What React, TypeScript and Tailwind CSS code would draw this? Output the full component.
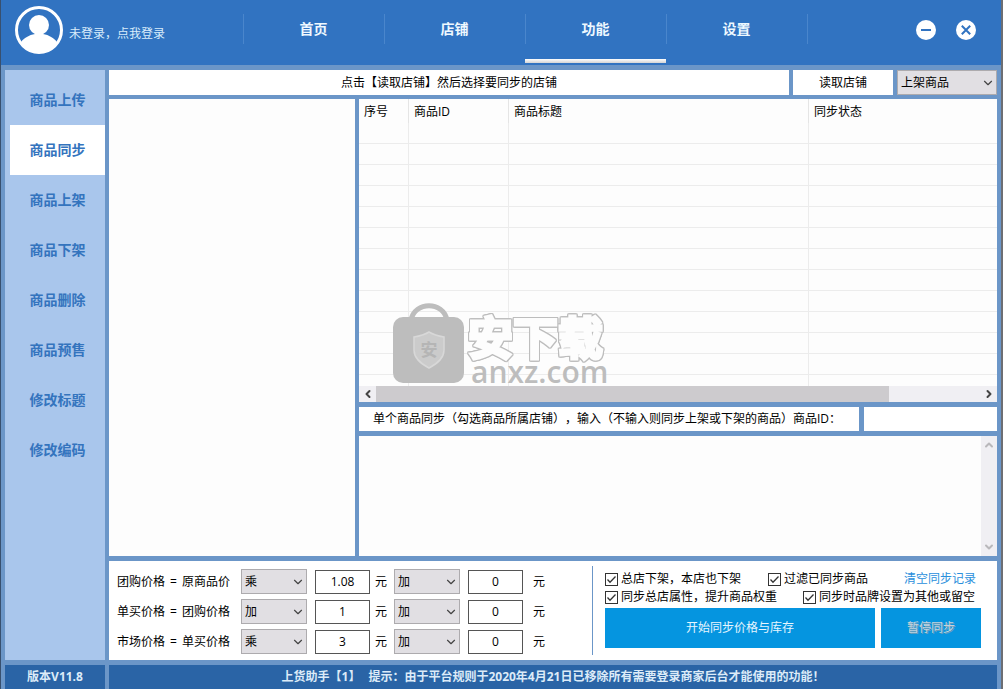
import { useState } from "react";
import { ChevronDown, ChevronLeft, ChevronRight, ChevronUp } from "lucide-react";

const tabs = ["首页", "店铺", "功能", "设置"];

const menuItems = [
  "商品上传",
  "商品同步",
  "商品上架",
  "商品下架",
  "商品删除",
  "商品预售",
  "修改标题",
  "修改编码",
];

const priceRules = [
  { target: "团购价格", source: "原商品价", op: "乘", factor: "1.08" },
  { target: "单买价格", source: "团购价格", op: "加", factor: "1" },
  { target: "市场价格", source: "单买价格", op: "乘", factor: "3" },
];

const operators = ["加", "减", "乘", "除"];

function Select({ label, value, options, className }: { label: string; value: string; options: string[]; className: string }) {
  return (
    <div className={`relative ${className}`}>
      <select
        aria-label={label}
        defaultValue={value}
        className="h-full w-full appearance-none border border-[#adabae] bg-[#e1dfe3] pl-[3px] text-black"
      >
        {options.map((option) => (
          <option key={option}>{option}</option>
        ))}
      </select>
      <ChevronDown className="pointer-events-none absolute top-1/2 right-[2px] size-[14px] -translate-y-1/2 text-[#444]" strokeWidth={2} />
    </div>
  );
}

function NumberInput({ label, value }: { label: string; value: string }) {
  return (
    <input
      type="text"
      aria-label={label}
      defaultValue={value}
      className="h-6 w-[55px] border border-[#555] bg-white text-center"
    />
  );
}

function Check({ label, className }: { label: string; className?: string }) {
  return (
    <label className={`flex items-center gap-[3px] whitespace-nowrap ${className ?? ""}`}>
      <span className="relative size-[13px]">
        <input type="checkbox" defaultChecked className="peer block size-[13px] appearance-none border border-[#333] bg-white" />
        <svg viewBox="0 0 13 13" className="pointer-events-none absolute inset-0 hidden size-[13px] peer-checked:block">
          <path d="M2.5 6.5 5 9.2 10.5 3.5" fill="none" stroke="#333" strokeWidth="1.3" />
        </svg>
      </span>
      {label}
    </label>
  );
}

function Header() {
  const [active, setActive] = useState("功能");

  return (
    <header className="flex h-[65px] shrink-0 bg-[#3173c1]">
      <a href="#login" className="flex w-[242px] shrink-0 items-start gap-[6px] pt-[6px] pl-[14px] text-[#d9edfb]">
        <svg viewBox="0 0 48 48" className="size-12">
          <defs>
            <clipPath id="avatar">
              <circle cx="24" cy="24" r="22.5" />
            </clipPath>
          </defs>
          <circle cx="24" cy="24" r="22.5" fill="none" stroke="#fff" strokeWidth="3" />
          <g fill="#fff" clipPath="url(#avatar)">
            <circle cx="24" cy="19" r="10" />
            <path d="M20 26h8v2c6 1 11 4 14 8l2 12H4l2-12c3-4 8-7 14-8z" />
          </g>
        </svg>
        <span className="mt-5">未登录，点我登录</span>
      </a>

      <nav className="flex">
        {tabs.map((tab) => (
          <button
            key={tab}
            type="button"
            onClick={() => setActive(tab)}
            className="relative w-[141px] pb-[7px] text-sm font-bold text-[#eef8ff]"
          >
            <span className="absolute top-[14px] left-0 h-[30px] w-px bg-[#4a86cc]" />
            {tab}
            {tab === active && (
              <span className="absolute bottom-[2px] left-0 h-[4px] w-full bg-linear-to-b from-white to-[#d4d4d4]" />
            )}
          </button>
        ))}
        <span className="mt-[14px] h-[30px] w-px bg-[#4a86cc]" />
      </nav>

      <div className="ml-auto flex items-start gap-5 pt-5 pr-[25px]">
        <button type="button" aria-label="最小化">
          <svg viewBox="0 0 20 20" className="size-5">
            <circle cx="10" cy="10" r="10" fill="#fff" />
            <path d="M5 10h10" stroke="#3173c1" strokeWidth="2" />
          </svg>
        </button>
        <button type="button" aria-label="关闭">
          <svg viewBox="0 0 20 20" className="size-5">
            <circle cx="10" cy="10" r="10" fill="#fff" />
            <path d="m5.8 5.8 8.4 8.4m0-8.4-8.4 8.4" stroke="#3173c1" strokeWidth="2" />
          </svg>
        </button>
      </div>
    </header>
  );
}

function Sidebar() {
  const [active, setActive] = useState("商品同步");

  return (
    <nav className="flex w-[100px] shrink-0 flex-col bg-[#a9c6ec] pt-[5px] pl-[5px]">
      {menuItems.map((item) => (
        <button
          key={item}
          type="button"
          onClick={() => setActive(item)}
          className={`h-[50px] text-sm font-bold text-[#3474be] ${item === active ? "bg-white" : ""}`}
        >
          {item}
        </button>
      ))}
    </nav>
  );
}

function Watermark() {
  return (
    <div className="pointer-events-none absolute bottom-[3px] left-[34px] flex items-end gap-1">
      <svg viewBox="0 0 71 80" className="h-20 w-[71px]">
        <path d="M18 17C22-2 50-2 54 17" fill="none" stroke="#bdbdbd" strokeWidth="5" />
        <rect y="14" width="71" height="66" rx="10" fill="#bdbdbd" />
        <path
          d="M36 29c5 3 9 4 15 5v13c0 8-6 13-15 18-9-5-15-10-15-18V34c6-1 10-2 15-5z"
          fill="#cbcbcb"
          stroke="#d8d8d8"
          strokeWidth="1.5"
        />
        <text x="36" y="53" textAnchor="middle" fontSize="17" fontWeight="700" fill="#b5b5b5">
          安
        </text>
      </svg>
      <div className="text-[#bdbdbd]">
        <div className="text-[45px] leading-[46px] font-bold text-[#fdfdfd] [-webkit-text-stroke:3px_#fdfdfd] [filter:drop-shadow(1px_0_0_#bdbdbd)_drop-shadow(-1px_0_0_#bdbdbd)_drop-shadow(0_1px_0_#bdbdbd)_drop-shadow(0_-1px_0_#bdbdbd)]">
          安下载
        </div>
        <div className="pl-[3px] text-[30px] leading-[22px] font-semibold">anxz.com</div>
      </div>
    </div>
  );
}

function ProductTable() {
  const head = "border-r border-[#e5e5e5] pt-px pl-[5px] text-left font-normal";
  const cell = "border-r border-b border-[#ececec]";

  return (
    <div className="relative bg-[#fdfdfd]">
      <table className="w-full table-fixed border-separate border-spacing-0">
        <thead>
          <tr className="h-6">
            <th className={`w-[50px] ${head}`}>序号</th>
            <th className={`w-[100px] ${head}`}>商品ID</th>
            <th className={`w-[300px] ${head}`}>商品标题</th>
            <th className="pt-px pl-[5px] text-left font-normal">同步状态</th>
          </tr>
        </thead>
        <tbody>
          {Array.from({ length: 12 }, (_, i) => (
            <tr key={i} className="h-[21px]">
              <td className={cell} />
              <td className={cell} />
              <td className={cell} />
              <td className="border-b border-[#ececec]" />
            </tr>
          ))}
          <tr className="h-[11px]">
            <td className="border-r border-[#ececec]" />
            <td className="border-r border-[#ececec]" />
            <td className="border-r border-[#ececec]" />
            <td />
          </tr>
        </tbody>
      </table>
      <div className="flex h-4 bg-[#f0eff3] text-[#444]">
        <button type="button" aria-label="向左滚动" className="flex w-[17px] items-center justify-center">
          <ChevronLeft className="size-3" strokeWidth={4} />
        </button>
        <div className="flex-1">
          <div className="h-full w-[85%] bg-[#cdcbce]" />
        </div>
        <button type="button" aria-label="向右滚动" className="flex w-[17px] items-center justify-center">
          <ChevronRight className="size-3" strokeWidth={4} />
        </button>
      </div>
      <div className="pointer-events-none absolute inset-x-0 top-0 bottom-4">
        <Watermark />
      </div>
    </div>
  );
}

function SyncLog() {
  return (
    <div className="flex min-h-[120px] flex-1 bg-[#fdfdfd]">
      <textarea aria-label="同步日志" className="flex-1 resize-none p-1 outline-none" />
      <div className="flex w-4 flex-col items-center justify-between bg-[#f0eff3] py-[3px] text-[#b9b8bb]">
        <button type="button" aria-label="向上滚动">
          <ChevronUp className="size-3" strokeWidth={4} />
        </button>
        <button type="button" aria-label="向下滚动">
          <ChevronDown className="size-3" strokeWidth={4} />
        </button>
      </div>
    </div>
  );
}

function SyncSettings() {
  return (
    <section className="flex bg-white">
      <div className="flex w-[483px] shrink-0 flex-col gap-[5px] pt-2 pb-[6px] pl-2">
        {priceRules.map((rule) => (
          <div key={rule.target} className="flex h-[25px] items-center">
            <span className="flex w-[124px] gap-[5px] whitespace-nowrap">
              <span>{rule.target}</span>
              <span>=</span>
              <span>{rule.source}</span>
            </span>
            <Select label={`${rule.target} 运算`} value={rule.op} options={operators} className="mr-2 h-[25px] w-[66px]" />
            <NumberInput label={`${rule.target} 系数`} value={rule.factor} />
            <span className="w-6 pl-[5px]">元</span>
            <Select label={`${rule.target} 附加运算`} value="加" options={operators} className="mr-2 h-[25px] w-[66px]" />
            <NumberInput label={`${rule.target} 附加金额`} value="0" />
            <span className="pl-[10px]">元</span>
          </div>
        ))}
      </div>

      <div className="my-[5px] w-px bg-[#6b96c8]" />

      <div className="flex flex-1 flex-col pt-[9px] pr-4 pl-3">
        <div className="flex h-[18px] items-center">
          <Check label="总店下架，本店也下架" className="w-[163px]" />
          <Check label="过滤已同步商品" className="w-[136px]" />
          <a href="#clear" className="whitespace-nowrap text-[#2a8fdc]">
            清空同步记录
          </a>
        </div>
        <div className="flex h-[18px] items-center">
          <Check label="同步总店属性，提升商品权重" className="w-[198px]" />
          <Check label="同步时品牌设置为其他或留空" />
        </div>
        <div className="mt-[2px] flex h-10 gap-[6px]">
          <button type="button" className="flex-1 bg-[#0595e0] text-[#e6f6ff]">
            开始同步价格与库存
          </button>
          <button type="button" disabled className="w-[100px] bg-[#0595e0] text-[#c5d3dc] [text-shadow:1px_1px_0_#6f9dba]">
            暂停同步
          </button>
        </div>
      </div>
    </section>
  );
}

export default function App() {
  return (
    <div
      lang="zh-CN"
      className="flex min-h-screen flex-col border-r-2 border-l border-r-[#6c6e73] border-l-[#38506f] bg-[#6b96c8] font-['Open_Sans','Noto_Sans_CJK_SC',sans-serif] text-xs text-black [text-spacing-trim:space-all]"
    >
      <Header />

      <div className="flex flex-1 gap-1 px-1 py-[5px]">
        <Sidebar />

        <main className="flex min-w-0 flex-1 flex-col">
          <div className="mb-1 flex h-[25px] gap-1">
            <div className="flex flex-1 items-center justify-center bg-white">点击【读取店铺】然后选择要同步的店铺</div>
            <button type="button" className="w-[100px] bg-white">
              读取店铺
            </button>
            <Select label="商品范围" value="上架商品" options={["上架商品", "下架商品"]} className="w-[100px]" />
          </div>

          <div className="mb-[5px] flex flex-1 gap-1">
            <div className="w-[246px] shrink-0 bg-[#fdfdfd]" />
            <div className="flex min-w-0 flex-1 flex-col gap-[5px]">
              <ProductTable />
              <div className="flex h-6 gap-[5px]">
                <label htmlFor="product-id" className="flex w-[500px] shrink-0 items-center bg-white pl-[14px] whitespace-nowrap">
                  单个商品同步（勾选商品所属店铺），输入（不输入则同步上架或下架的商品）商品ID：
                </label>
                <input id="product-id" type="text" className="min-w-0 flex-1 bg-white px-1" />
              </div>
              <SyncLog />
            </div>
          </div>

          <SyncSettings />
        </main>
      </div>

      <footer className="flex h-6 shrink-0 gap-1 px-1 font-bold text-[#dcebf8]">
        <div className="flex w-[100px] shrink-0 items-center justify-center bg-[#2a64a6]">版本V11.8</div>
        <div className="flex flex-1 items-center justify-center gap-2 bg-[#2a64a6]">
          <span>上货助手【1】</span>
          <span>提示：由于平台规则于2020年4月21日已移除所有需要登录商家后台才能使用的功能！</span>
        </div>
      </footer>
    </div>
  );
}
